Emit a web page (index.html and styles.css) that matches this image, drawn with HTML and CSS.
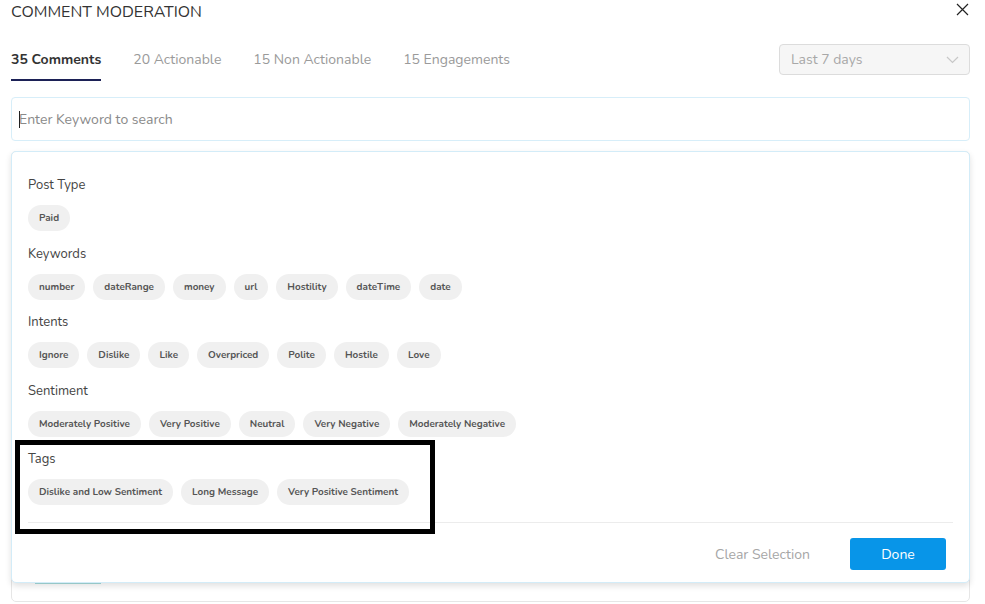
FILE: index.html
```html
<!DOCTYPE html>
<html lang="en">
<head>
    <meta charset="UTF-8">
    <title>Comment Moderation</title>
    <link rel="stylesheet" href="styles.css">
</head>
<body>
    <div class="modal">
        <header class="modal-header">
            <h1>Comment Moderation</h1>
            <button class="close" aria-label="Close">
                <svg width="13" height="13" viewBox="0 0 13 13"><path d="M1 1L12 12M12 1L1 12" stroke="#222" stroke-width="1.2"/></svg>
            </button>
        </header>

        <div class="toolbar">
            <nav class="tabs">
                <a href="#" class="active">35 Comments</a>
                <a href="#">20 Actionable</a>
                <a href="#">15 Non Actionable</a>
                <a href="#">15 Engagements</a>
            </nav>
            <div class="range-select">
                <span>Last 7 days</span>
                <svg width="13" height="8" viewBox="0 0 13 8"><path d="M1 1L6.5 6.5L12 1" fill="none" stroke="#c8c8c8" stroke-width="1.2"/></svg>
            </div>
        </div>

        <div class="search">
            <span class="caret"></span>
            <input type="text" placeholder="Enter Keyword to search">
        </div>

        <div class="list">
            <span class="list-tab"></span>

            <div class="filters">
                <section class="filter-group">
                    <h3>Post Type</h3>
                    <div class="chips">
                        <span class="chip">Paid</span>
                    </div>
                </section>

                <section class="filter-group">
                    <h3>Keywords</h3>
                    <div class="chips">
                        <span class="chip">number</span>
                        <span class="chip">dateRange</span>
                        <span class="chip">money</span>
                        <span class="chip">url</span>
                        <span class="chip">Hostility</span>
                        <span class="chip">dateTime</span>
                        <span class="chip">date</span>
                    </div>
                </section>

                <section class="filter-group">
                    <h3>Intents</h3>
                    <div class="chips">
                        <span class="chip">Ignore</span>
                        <span class="chip">Dislike</span>
                        <span class="chip">Like</span>
                        <span class="chip">Overpriced</span>
                        <span class="chip">Polite</span>
                        <span class="chip">Hostile</span>
                        <span class="chip">Love</span>
                    </div>
                </section>

                <section class="filter-group">
                    <h3>Sentiment</h3>
                    <div class="chips">
                        <span class="chip">Moderately Positive</span>
                        <span class="chip">Very Positive</span>
                        <span class="chip">Neutral</span>
                        <span class="chip">Very Negative</span>
                        <span class="chip">Moderately Negative</span>
                    </div>
                </section>

                <section class="filter-group">
                    <h3>Tags</h3>
                    <div class="chips">
                        <span class="chip">Dislike and Low Sentiment</span>
                        <span class="chip">Long Message</span>
                        <span class="chip">Very Positive Sentiment</span>
                    </div>
                </section>

                <div class="filters-footer">
                    <button class="clear">Clear Selection</button>
                    <button class="done">Done</button>
                </div>
            </div>
        </div>
    </div>

    <div class="highlight"></div>
</body>
</html>
```

FILE: styles.css
```css
body {
    margin: 0;
    font-family: 'Nunito', 'Lato', sans-serif;
    color: #333;
    background-color: #fff;
}

.modal {
    padding: 0 15px 0 11px;
}

.modal-header {
    display: flex;
    justify-content: space-between;
    align-items: center;
    height: 24px;
}

.modal-header h1 {
    margin: 0;
    font-size: 16px;
    font-weight: normal;
    text-transform: uppercase;
    color: #333;
    line-height: 22px;
}

.close {
    background: none;
    border: none;
    padding: 0;
    margin-right: 1px;
    margin-top: -2px;
    cursor: pointer;
}

.toolbar {
    display: flex;
    justify-content: space-between;
    align-items: flex-start;
    margin-top: 20px;
}

.tabs {
    display: flex;
    gap: 32px;
}

.tabs a {
    color: #9a9a9a;
    text-decoration: none;
    font-size: 14px;
    line-height: 30px;
    padding-top: 1px;
    padding-bottom: 4px;
    border-bottom: 2px solid transparent;
}

.tabs a.active {
    color: #333;
    font-weight: bold;
    border-bottom-color: #1c2156;
}

.range-select {
    width: 191px;
    height: 31px;
    box-sizing: border-box;
    display: flex;
    justify-content: space-between;
    align-items: center;
    padding: 0 10px 0 11px;
    background-color: #f6f6f6;
    border: 1px solid #dcdcdc;
    border-radius: 4px;
    color: #a8a8a8;
    font-size: 14px;
}

.search {
    position: relative;
    margin-top: 16px;
    height: 44px;
    box-sizing: border-box;
    border: 1px solid #d7eef9;
    border-radius: 4px;
    display: flex;
    align-items: center;
    padding-left: 7px;
}

.search input {
    border: none;
    outline: none;
    font-family: inherit;
    font-size: 14px;
    color: #333;
    width: 100%;
    padding: 0;
}

.search input::placeholder {
    color: #8a8a8a;
}

.caret {
    position: absolute;
    left: 7px;
    top: 13px;
    width: 1px;
    height: 17px;
    background-color: #222;
}

.list {
    position: relative;
    margin-top: 10px;
    height: 451px;
    box-sizing: border-box;
    border: 1px solid #e6e6e6;
    border-radius: 5px;
}

.list-tab {
    position: absolute;
    left: 23px;
    top: 430px;
    width: 66px;
    height: 2px;
    background-color: #a6dcdc;
}

.filters {
    position: absolute;
    left: -1px;
    right: -1px;
    top: -1px;
    height: 432px;
    box-sizing: border-box;
    padding: 24px 22px 0 16px;
    background-color: #fff;
    border: 1px solid #d3ecf8;
    border-radius: 5px;
    box-shadow: 0 3px 6px rgba(0, 0, 0, 0.12);
}

.filter-group {
    margin-bottom: 13.5px;
}

.filter-group h3 {
    margin: 0 0 11px;
    font-size: 13px;
    font-weight: normal;
    line-height: 18px;
    color: #444;
}

.chips {
    display: flex;
    flex-wrap: wrap;
    gap: 8px;
}

.chip {
    display: inline-block;
    height: 26px;
    line-height: 26px;
    padding: 0 11px;
    border-radius: 13px;
    background-color: #f0f0f0;
    color: #555;
    font-size: 9.9px;
    font-weight: bold;
}

.filters-footer {
    display: flex;
    justify-content: flex-end;
    align-items: center;
    gap: 40px;
    margin-top: 17px;
    margin-right: -6px;
    padding-top: 15px;
    border-top: 1px solid #ececec;
}

.clear {
    background: none;
    border: none;
    padding: 0;
    font-family: inherit;
    font-size: 14px;
    color: #a6a6a6;
    cursor: pointer;
}

.done {
    width: 96px;
    height: 32px;
    margin-right: 7px;
    background-color: #0895e8;
    color: #fff;
    border: none;
    border-radius: 3px;
    font-family: inherit;
    font-size: 14px;
    cursor: pointer;
}

.highlight {
    position: absolute;
    left: 15px;
    top: 440px;
    width: 420px;
    height: 94px;
    box-sizing: border-box;
    border: 5px solid #000;
}
```
